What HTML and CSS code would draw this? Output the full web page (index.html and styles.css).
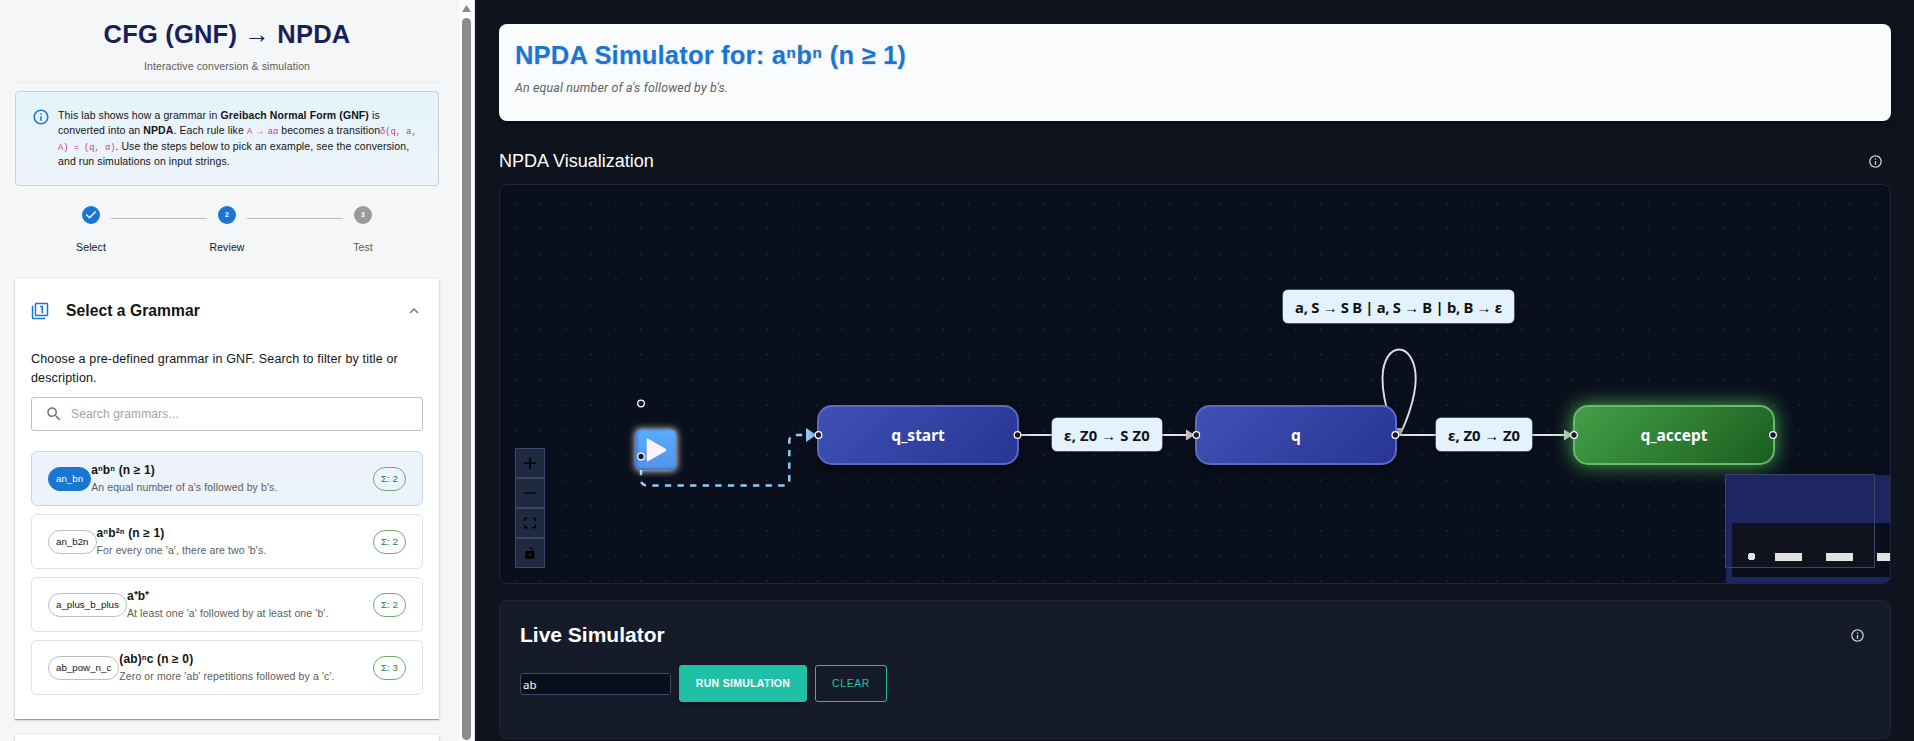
FILE: index.html
```html
<!DOCTYPE html>
<html lang="en">
<head>
<meta charset="utf-8">
<title>CFG (GNF) → NPDA</title>
<link rel="stylesheet" href="styles.css">
</head>
<body>
<div class="app">
  <aside class="sidebar">
    <div class="sidebar-content">
      <header class="side-header">
        <h1>CFG (GNF) → NPDA</h1>
        <p>Interactive conversion &amp; simulation</p>
      </header>

      <section class="info-box">
        <svg class="info-icon" viewBox="0 0 24 24"><path d="M11 7h2v2h-2zm0 4h2v6h-2zm1-9C6.480 2 2 6.480 2 12s4.480 10 10 10 10-4.480 10-10S17.520 2 12 2zm0 18c-4.410 0-8-3.590-8-8s3.590-8 8-8 8 3.590 8 8-3.590 8-8 8z"/></svg>
        <p>This lab shows how a grammar in <b>Greibach Normal Form (GNF)</b> is<br>converted into an <b>NPDA</b>. Each rule like <code>A → aα</code> becomes a transition<code>δ(q, a,<br>A) = (q, α)</code>. Use the steps below to pick an example, see the conversion,<br>and run simulations on input strings.</p>
      </section>

      <nav class="stepper">
        <div class="step">
          <svg viewBox="0 0 24 24"><path fill="#1976d2" d="M12 0a12 12 0 1 0 0 24 12 12 0 0 0 0-24zm-2 17l-5-5 1.400-1.400 3.600 3.600 7.600-7.600L19 8l-9 9z"/></svg>
          <span>Select</span>
        </div>
        <div class="step linked">
          <svg viewBox="0 0 24 24"><circle cx="12" cy="12" r="12" fill="#1976d2"/><text x="12" y="15.300" class="step-num">2</text></svg>
          <span>Review</span>
        </div>
        <div class="step linked idle">
          <svg viewBox="0 0 24 24"><circle cx="12" cy="12" r="12" fill="#999"/><text x="12" y="15.300" class="step-num">3</text></svg>
          <span>Test</span>
        </div>
      </nav>

      <section class="panel">
        <div class="panel-head">
          <svg class="panel-icon" viewBox="0 0 24 24"><path d="M3 5H1v16c0 1.100.9 2 2 2h16v-2H3V5zm11 10h2V5h-4v2h2v8zm7-14H7c-1.100 0-2 .9-2 2v14c0 1.100.9 2 2 2h14c1.100 0 2-.9 2-2V3c0-1.100-.9-2-2-2zm0 16H7V3h14v14z"/></svg>
          <h2>Select a Grammar</h2>
          <svg class="chevron" viewBox="0 0 24 24"><path d="M12 8l-6 6 1.410 1.410L12 10.830l4.590 4.580L18 14z"/></svg>
        </div>
        <p class="panel-text">Choose a pre-defined grammar in GNF. Search to filter by title or<br>description.</p>
        <div class="search">
          <svg viewBox="0 0 24 24"><path d="M15.500 14h-.79l-.28-.27C15.410 12.590 16 11.110 16 9.500 16 5.910 13.090 3 9.500 3S3 5.910 3 9.500 5.910 16 9.500 16c1.610 0 3.090-.59 4.230-1.570l.27.28v.79l5 4.990L20.490 19l-4.990-5zm-6 0C7.010 14 5 11.990 5 9.500S7.010 5 9.500 5 14 7.010 14 9.500 11.990 14 9.500 14z"/></svg>
          <span>Search grammars...</span>
        </div>
        <ul class="grammars">
          <li class="selected"><span class="chip">an_bn</span><div class="desc"><b>aⁿbⁿ (n ≥ 1)</b><span>An equal number of a's followed by b's.</span></div><span class="chip sigma">Σ: 2</span></li>
          <li><span class="chip">an_b2n</span><div class="desc"><b>aⁿb²ⁿ (n ≥ 1)</b><span>For every one 'a', there are two 'b's.</span></div><span class="chip sigma">Σ: 2</span></li>
          <li><span class="chip">a_plus_b_plus</span><div class="desc"><b>a⁺b⁺</b><span>At least one 'a' followed by at least one 'b'.</span></div><span class="chip sigma">Σ: 2</span></li>
          <li><span class="chip">ab_pow_n_c</span><div class="desc"><b>(ab)ⁿc (n ≥ 0)</b><span>Zero or more 'ab' repetitions followed by a 'c'.</span></div><span class="chip sigma">Σ: 3</span></li>
        </ul>
      </section>
      <section class="panel next"></section>
    </div>
    <div class="scrollbar">
      <svg viewBox="0 0 9 7"><path d="M4.500 0.300Q5 0.300 8.600 6.300Q8.600 7 8 7H1Q.4 7 .4 6.300Q4 .3 4.500 .3z"/></svg>
      <div class="thumb"></div>
    </div>
  </aside>

  <main class="main">
    <section class="sim-header">
      <h2>NPDA Simulator for: aⁿbⁿ (n ≥ 1)</h2>
      <p>An equal number of a's followed by b's.</p>
    </section>

    <div class="viz-head">
      <h3>NPDA Visualization</h3>
      <svg class="hint" viewBox="0 0 24 24"><path d="M11 7h2v2h-2zm0 4h2v6h-2zm1-9C6.480 2 2 6.480 2 12s4.480 10 10 10 10-4.480 10-10S17.520 2 12 2zm0 18c-4.410 0-8-3.590-8-8s3.590-8 8-8 8 3.590 8 8-3.590 8-8 8z"/></svg>
    </div>

    <section class="canvas">
      <svg class="layer" viewBox="500 185 1390 398">
        <defs>
          <pattern id="dots" x="502.600" y="190.900" width="25.180" height="25.180" patternUnits="userSpaceOnUse"><circle cx="12.590" cy="12.590" r="0.700" fill="#35405a"/></pattern>
        </defs>
        <rect x="500" y="185" width="1390" height="398" fill="url(#dots)"/>
        <path d="M641 456.500V479.200Q641 485.500 647.300 485.500H783Q789.300 485.500 789.300 479.200V441.300Q789.300 435 795.600 435H817" fill="none" stroke="#90caf9" stroke-width="2.500" stroke-dasharray="6.290 6.290"/>
        <path d="M806 428L816.500 435L806 442z" fill="#90caf9"/>
        <g fill="none" stroke="#e0e0e0" stroke-width="1.900">
          <path d="M1018 435H1195"/>
          <path d="M1396 435H1573"/>
          <path d="M1394 432C1384 402 1382.400 390 1382.500 378C1382.800 359 1391 349.500 1399 349.500C1408 349.500 1415.800 361 1415.700 379C1415.600 399 1405 425 1400 434"/>
        </g>
        <path d="M1186 429.500L1195 435L1186 440.500z" fill="#c9c9c9"/>
        <path d="M1564 429.500L1573 435L1564 440.500z" fill="#c9c9c9"/>
        <path d="M1394 428L1403 428L1399 437z" fill="#b9b9b9"/>
      </svg>

      <div class="start"><svg viewBox="0 0 40 40"><path d="M10.700 9.500Q10.700 8 12 8.700L29.600 18.800Q31.300 20 29.600 21.200L12 31.300Q10.700 32 10.700 30.500z" fill="#fbf1ff"/></svg></div>
      <div class="node n-start">q_start</div>
      <div class="node n-q">q</div>
      <div class="node n-accept">q_accept</div>

      <div class="edge-label e-first">ε, Z0 → S Z0</div>
      <div class="edge-label e-loop">a, S → S B | a, S → B | b, B → ε</div>
      <div class="edge-label e-last">ε, Z0 → Z0</div>

      <svg class="layer" viewBox="500 185 1390 398">
        <g fill="#1a1a2e" stroke="#fff" stroke-width="1.250">
          <circle cx="641" cy="403.500" r="3.300"/><circle cx="641" cy="456.500" r="3.300"/>
          <circle cx="818.500" cy="435" r="3.300"/><circle cx="1017.500" cy="435" r="3.300"/>
          <circle cx="1196.300" cy="435" r="3.300"/><circle cx="1395.300" cy="435" r="3.300"/>
          <circle cx="1574" cy="435" r="3.300"/><circle cx="1773" cy="435" r="3.300"/>
        </g>
        <g shape-rendering="crispEdges">
          <rect x="1726" y="475" width="148" height="92" fill="#10131e"/>
          <path d="M1726 475H1890V523H1732V577H1890V583H1726z" fill="#1d2663"/>
          <g fill="#e2e2e2">
            <path d="M1749 553h5v1h1v5h-1v1h-5v-1h-1v-5h1z"/>
            <rect x="1775" y="553" width="27" height="8"/>
            <rect x="1826" y="553" width="27" height="8"/>
            <rect x="1877" y="553" width="13" height="8"/>
          </g>
          <path d="M1725.500 474.500H1874.500V567.500H1725.500z" fill="none" stroke="#3a4463"/>
        </g>
      </svg>

      <div class="controls">
        <button><svg viewBox="0 0 32 32"><path d="M32 18.133H18.133V32h-4.266V18.133H0v-4.266h13.867V0h4.266v13.867H32z"/></svg></button>
        <button><svg viewBox="0 0 32 32"><path d="M0 14.400h32v3.200H0z"/></svg></button>
        <button><svg viewBox="0 0 32 30"><path d="M3.692 4.630c0-.53.4-.938.939-.938h5.215V0H4.708C2.130 0 0 2.054 0 4.630v5.216h3.692V4.631zM27.354 0h-5.200v3.692h5.170c.530 0 .984.400.984.939v5.215H32V4.631A4.624 4.624 0 0 0 27.354 0zm.954 24.830c0 .532-.4.940-.939.940h-5.215v3.768h5.215c2.577 0 4.631-2.130 4.631-4.707v-5.139h-3.692v5.139zm-23.677.940c-.531 0-.939-.4-.939-.940v-5.138H0v5.139c0 2.577 2.130 4.707 4.708 4.707h5.138V25.770H4.631z"/></svg></button>
        <button><svg viewBox="0 0 25 32"><path d="M21.333 10.667H19.810V7.619C19.810 3.429 16.380 0 12.190 0c-4.114 1.828-1.370 2.133.305 2.438 1.676.305 4.420 2.590 4.420 5.181v3.048H3.047A3.056 3.056 0 0 0 0 13.714v15.238A3.056 3.056 0 0 0 3.048 32h18.285a3.056 3.056 0 0 0 3.048-3.048V13.714a3.056 3.056 0 0 0-3.048-3.047zM12.190 24.533a3.056 3.056 0 0 1-3.047-3.047 3.056 3.056 0 0 1 3.047-3.048 3.056 3.056 0 0 1 3.048 3.048 3.056 3.056 0 0 1-3.048 3.047z"/></svg></button>
      </div>
    </section>

    <section class="live">
      <div class="live-head">
        <h2>Live Simulator</h2>
        <svg class="hint" viewBox="0 0 24 24"><path d="M11 7h2v2h-2zm0 4h2v6h-2zm1-9C6.480 2 2 6.480 2 12s4.480 10 10 10 10-4.480 10-10S17.520 2 12 2zm0 18c-4.410 0-8-3.590-8-8s3.590-8 8-8 8 3.590 8 8-3.590 8-8 8z"/></svg>
      </div>
      <div class="live-form">
        <input type="text" value="ab">
        <button class="run">RUN SIMULATION</button>
        <button class="clear">CLEAR</button>
      </div>
    </section>
  </main>
</div>
</body>
</html>
```
FILE: styles.css
```css
* { box-sizing: border-box; margin: 0; padding: 0; }

body {
  height: 741px;
  overflow: hidden;
  font-family: "Liberation Sans", Arial, sans-serif;
  color: #141414;
  background: #0f131e;
}

.app { display: flex; height: 741px; overflow: hidden; }

/* Sidebar */
.sidebar { display: flex; flex: 0 0 475px; background: #f5f6f8; }
.sidebar-content { width: 459px; padding: 15px 20px 0 15px; height: 741px; overflow: hidden; }

.side-header { height: 68px; border-bottom: 1px solid #e9ebed; text-align: center; }
.side-header h1 { font-size: 25.5px; line-height: 39px; color: #1a1f5c; letter-spacing: 0.2px; }
.side-header p { margin-top: 5px; font-size: 10.5px; line-height: 15px; letter-spacing: 0.11px; color: #5c5c5c; }

.info-box {
  display: flex;
  height: 95px;
  margin-top: 8px;
  padding: 16px 0 0 16px;
  border: 1px solid #c8d1da;
  border-radius: 4px;
  background: linear-gradient(#e5f3fc, #eef3fb);
}
.info-icon { flex: none; width: 18px; height: 18px; margin: 0 8px 0 0; fill: #1976d2; }
.info-box p { font-size: 10.5px; line-height: 15.4px; letter-spacing: 0.1px; white-space: nowrap; }
.info-box code { font: 8.7px/1 "Liberation Mono", monospace; letter-spacing: 0; color: #d63384; }

.stepper { display: flex; height: 73px; margin-top: 20px; margin-left: 8px; }
.step { position: relative; flex: 0 0 136px; display: flex; flex-direction: column; align-items: center; gap: 16px; }
.step svg { width: 18px; height: 18px; }
.step span { font-size: 10.5px; line-height: 15px; letter-spacing: 0.11px; }
.step.idle span { color: #5c5c5c; }
.step.linked::before { content: ""; position: absolute; top: 12px; left: -48px; width: 96px; border-top: 1px solid #bdbdbd; }
.step-num { font: bold 9px "Liberation Sans", sans-serif; fill: #fff; text-anchor: middle; }

.panel {
  height: 440px;
  padding: 0 16px;
  background: #fff;
  box-shadow: 0 1px 1px rgba(0, 0, 0, 0.3), 0 1px 3px rgba(0, 0, 0, 0.14);
}
.panel.next { margin-top: 16px; }
.panel-head { display: flex; align-items: center; height: 64px; }
.panel-icon { width: 18px; height: 18px; fill: #1976d2; }
.panel-head h2 { flex: 1; margin-left: 17px; font-size: 15.6px; letter-spacing: 0.08px; }
.chevron { width: 18px; height: 18px; fill: #757575; }
.panel-text { margin-top: 7px; font-size: 12.5px; line-height: 19px; letter-spacing: 0.15px; white-space: nowrap; }

.search {
  display: flex;
  align-items: center;
  gap: 8px;
  height: 34px;
  margin-top: 9px;
  padding-left: 13px;
  border: 1px solid #c0c0c0;
  border-radius: 3px;
  font-size: 12px;
  letter-spacing: 0.13px;
  color: #a3a3a3;
}
.search svg { width: 18px; height: 18px; fill: #757575; }

.grammars { display: flex; flex-direction: column; gap: 8px; margin-top: 20px; list-style: none; }
.grammars li {
  display: flex;
  align-items: center;
  height: 55px;
  padding: 0 16px;
  border: 1px solid #e0e0e0;
  border-radius: 6px;
}
.grammars li.selected { background: #ecf3fb; border-color: #bfd9f2; }
.chip {
  flex: none;
  height: 24px;
  padding: 0 7px;
  border: 1px solid #bdbdbd;
  border-radius: 12px;
  font-size: 9.75px;
  line-height: 21px;
}
.selected .chip:first-child { background: #1976d2; border-color: #1976d2; color: #fff; }
.chip.sigma { width: 33px; padding: 0; border-color: #6fa873; color: #2e7d32; background: none; text-align: center; }
.desc { flex: 1; display: flex; flex-direction: column; white-space: nowrap; }
.desc b { font-size: 12px; line-height: 17px; letter-spacing: 0.14px; }
.desc span { font-size: 10.5px; line-height: 16px; letter-spacing: 0.11px; color: #5c5c5c; }

.scrollbar {
  flex: 0 0 16px;
  display: flex;
  flex-direction: column;
  align-items: center;
  padding: 5px 1px 0 0;
  background: #fcfcfc;
  border-right: 1px solid #e4e6e8;
}
.scrollbar svg { width: 9px; height: 7px; fill: #8b8b8b; }
.thumb { width: 9px; height: 722px; margin-top: 6px; border-radius: 5px; background: #8b8b8b; }

/* Main area */
.main { flex: 1; padding: 24px 23px 0 24px; }

.sim-header {
  height: 97px;
  padding: 14px 16px;
  border-radius: 8px;
  background: #fafbfc;
  box-shadow: 0 2px 4px rgba(0, 0, 0, 0.5);
}
.sim-header h2 { font-size: 25.5px; line-height: 34px; letter-spacing: 0.2px; color: #1976d2; text-shadow: 1px 1px 2px rgba(0, 0, 0, 0.12); }
.sim-header p { margin-top: 7px; font: italic 12.4px/18px Roboto, sans-serif; letter-spacing: 0.16px; color: #5f5f5f; }

.viz-head { display: flex; justify-content: space-between; align-items: center; height: 63px; padding: 18px 8px 0 0; }
.viz-head h3 { font-size: 18px; font-weight: 400; color: #fff; }
.hint { width: 15px; height: 15px; fill: #d0d4dc; }

.canvas {
  position: relative;
  height: 400px;
  overflow: hidden;
  border: 1px solid #1e2639;
  border-radius: 8px;
  background: #0a0f1d;
}
.layer { position: absolute; inset: 0; width: 1390px; height: 398px; }

.node {
  position: absolute;
  top: 220px;
  width: 202px;
  height: 60px;
  border: 2px solid #5c6bc0;
  border-radius: 15px;
  background: linear-gradient(135deg, #3f51b5, #283593);
  box-shadow: 0 5px 12px rgba(0, 0, 0, 0.45);
  color: #fff;
  font: bold 15.5px/56px "Noto Sans", sans-serif;
  text-align: center;
}
.n-start { left: 317px; }
.n-q { left: 695px; }
.n-accept {
  left: 1073px;
  border-color: #66bb6a;
  background: linear-gradient(135deg, #43a047, #1b5e20);
  box-shadow: 0 0 19px rgba(76, 190, 80, 0.9);
}

.start {
  position: absolute;
  left: 136px;
  top: 245px;
  width: 40px;
  height: 40px;
  border-radius: 4px;
  background: linear-gradient(#58acfc, #5294ea);
  box-shadow: 0 0 7px 1px rgba(255, 255, 255, 0.85), inset 0 -2px 2px #4378d8, inset 2px 0 2px #4a86e0;
}
.start svg { display: block; width: 40px; height: 40px; }

.edge-label {
  position: absolute;
  height: 33px;
  border-radius: 5px;
  background: #e3f2fd;
  box-shadow: 0 0 0 0.5px #8d99a8, 0 2px 4px rgba(0, 0, 0, 0.4);
  color: #111;
  font: bold 14.8px/34px "Noto Sans", sans-serif;
  text-align: center;
  white-space: nowrap;
}
.e-first { left: 552px; top: 233px; width: 110px; letter-spacing: 0.15px; }
.e-loop { left: 783px; top: 105px; width: 231px; letter-spacing: -0.28px; }
.e-last { left: 936px; top: 233px; width: 96px; }

.controls { position: absolute; left: 15px; top: 263px; width: 30px; display: flex; flex-direction: column; }
.controls button {
  display: flex;
  align-items: center;
  justify-content: center;
  height: 30px;
  border: 1px solid #3a4766;
  background: #1f2a40;
}
.controls svg { width: 12px; height: 12px; fill: #000; }

.live {
  height: 139px;
  margin-top: 16px;
  padding: 19px 20px 0;
  border: 1px solid #202434;
  border-radius: 8px;
  background: #151b29;
}
.live-head { display: flex; justify-content: space-between; align-items: center; height: 30px; padding-right: 5px; }
.live-head h2 { font-size: 21px; color: #fff; }
.live-form { display: flex; align-items: center; gap: 8px; height: 37px; margin-top: 15px; }
.live-form input {
  width: 151px;
  height: 22px;
  padding: 2px 2px 0;
  border: 1px solid #3a4766;
  border-radius: 3px;
  background: #0a0f1d;
  color: #fff;
  font: 11.5px "Noto Sans", sans-serif;
}
.live-form button {
  height: 37px;
  padding-bottom: 1px;
  border: 1px solid #20c0a6;
  border-radius: 3px;
  font: bold 10.5px "Liberation Sans", Arial, sans-serif;
  letter-spacing: 0.3px;
}
.run { width: 128px; background: #20c0a6; color: #fff; box-shadow: 0 2px 3px rgba(0, 0, 0, 0.35); }
.live-form .clear { width: 72px; background: none; color: #20c0a6; font-weight: 400; letter-spacing: 0.55px; }
```
